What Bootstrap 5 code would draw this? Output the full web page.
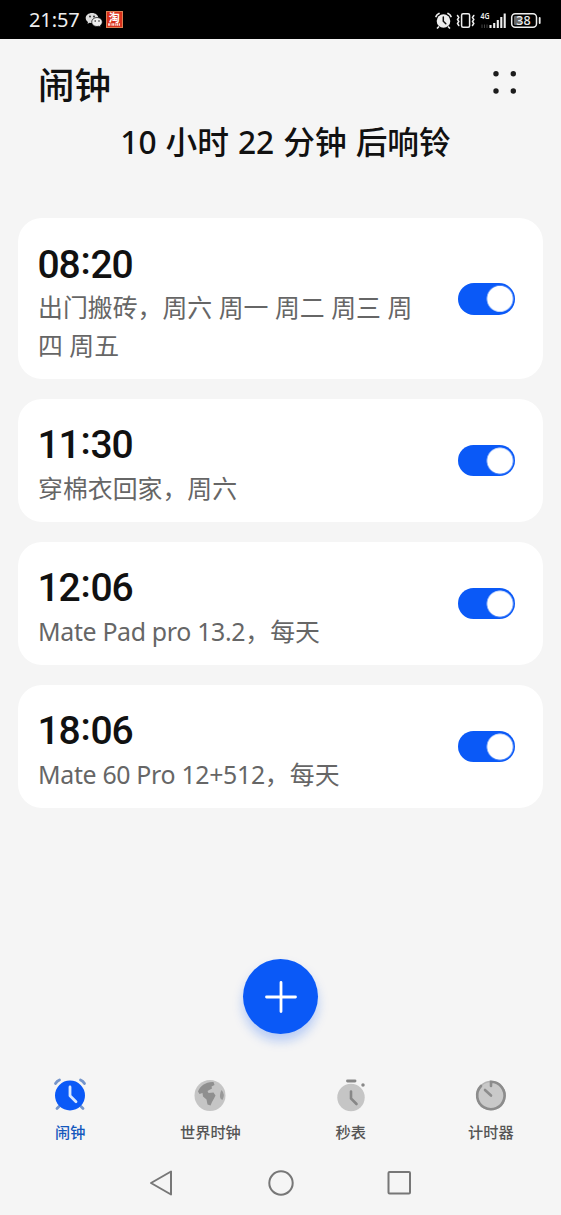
<!DOCTYPE html>
<html lang="zh-CN">
<head>
<meta charset="utf-8">
<meta name="viewport" content="width=device-width, initial-scale=1">
<title>闹钟</title>
<link rel="stylesheet" href="https://cdn.jsdelivr.net/npm/bootstrap@5.3.0/dist/css/bootstrap.min.css">
<style>
  body { background: #f5f5f5; color: #111; font-family: "Noto Sans", "Noto Sans CJK SC", sans-serif; height: 1215px; overflow: hidden; }
  svg { display: block; flex: none; }
  .status-bar { height: 39px; background: #000; color: #eee; padding: 0 20px 0 29px; }
  .status-time { font-size: 20px; line-height: 39px; letter-spacing: -.1px; }
  .taobao { width: 17px; height: 17px; margin-left: 3px; background: #d8301c; border: 1px solid #dd8053; font-size: 11px; line-height: 11px; font-weight: 700; color: #fff; }
  .title-row { height: 90px; padding: 0 42px 0 38px; }
  .title-row h1 { font: 500 36.5px/90px "Noto Sans CJK SC", sans-serif; }
  .countdown { font-size: 31.7px; line-height: 46px; height: 99.3px; font-weight: 500; margin-top: -10px; padding-left: 10px; white-space: pre; word-spacing: .8px; }
  .alarms { padding: 0 18px; gap: 19.5px; }
  .alarm { --bs-card-border-width: 0; --bs-card-border-radius: 24px; padding: 22px 28px 15px 20px; }
  .alarm-time { font-family: Roboto, "Noto Sans", sans-serif; font-size: 39px; line-height: 47px; font-weight: 500; letter-spacing: -1.2px; height: 49px; padding-top: 1.6px; margin-left: -.5px; }
  .colon { display: inline-block; transform: translateY(-4px); margin: 0 1px 0 1px; }
  .alarm-note { color: #666; font-size: 24.9px; line-height: 37.5px; width: 380px; }
  .latin { letter-spacing: -.33px; }
  .form-switch.toggle { padding: 0; min-height: 0; margin: 0 0 7px; }
  .toggle .form-check-input { width: 57.5px; height: 31.5px; margin: 0; float: none; display: block; border: 0; border-radius: 16px; background: #0a59f7 radial-gradient(circle at 41.5px 50%, #fff 12.7px, transparent 13.4px); }
  .add-btn { width: 75px; height: 75px; padding: 0; background: #0a59f7; margin-top: 151px; box-shadow: 0 7px 11px #0a59f745; }
  .tabs { margin-top: 43px; height: 76px; }
  .tab-item { color: #555; font: 500 15.2px/22px "Noto Sans CJK SC", sans-serif; gap: 7px; }
  .tab-item.active { color: #1458bd; }
  .sys-nav { height: 60px; padding: 0 147px; }
</style>
</head>
<body>
<div class="d-flex flex-column h-100">
  <div class="status-bar d-flex align-items-center flex-shrink-0">
    <span class="status-time">21:57</span>
    <svg width="18" height="16" viewBox="0 0 18 16" style="margin-left:5px">
      <path d="M7 1C3.4 1 .7 3.2.7 6c0 1.600.9 3 2.300 3.900l-.5 1.900 2.200-1.100c.7.2 1.400.3 2.300.3 3.600 0 6.300-2.200 6.300-5S10.600 1 7 1z" fill="#ddd"/>
      <path d="M12 5.500c-3 0-5.300 2-5.300 4.500s2.300 4.500 5.300 4.500c.7 0 1.300-.1 1.900-.3l1.800 1-.4-1.700c1.200-.8 2-2 2-3.500 0-2.500-2.300-4.500-5.300-4.500z" fill="#eee" stroke="#000" stroke-width=".7"/>
      <g fill="#222"><circle cx="5" cy="4.500" r=".9"/><circle cx="9" cy="4.500" r=".9"/><circle cx="10.200" cy="9" r=".8"/><circle cx="14" cy="9" r=".8"/></g>
    </svg>
    <span class="taobao d-flex flex-column align-items-center overflow-hidden"><span>淘</span>
      <svg width="12" height="3" viewBox="0 0 12 3"><path d="M0 1.500h12" stroke="#fbd5cd" stroke-width="2.500" stroke-dasharray="2 .6 1 .6"/></svg>
    </span>
    <svg class="ms-auto" width="106" height="20" viewBox="435 9 106 20">
      <g stroke="#eee" fill="none" stroke-linecap="round">
        <circle cx="443.500" cy="20" r="6.800" fill="#eee" stroke="none"/>
        <path d="M436 15.500q.7-2 3-3M451 15.500q-.7-2-3-3M438.500 26l-1 1M448.500 26l1 1" stroke-width="1.700"/>
        <path d="M443.300 16v4.200l2.500 2.500" stroke="#111" stroke-width="1.500"/>
        <rect x="461.600" y="12.800" width="8" height="13.400" rx="1.500" stroke-width="1.500"/>
        <path d="M457.500 14.500l1.300 2-1.300 2 1.300 2-1.300 2 1.300 2M473.800 14.500l-1.300 2 1.300 2-1.300 2 1.300 2-1.300 2" stroke-width="1.500"/>
        <g stroke-width="2.100" stroke-linecap="butt"><path d="M490.500 27v-3M494.200 27v-5M497.800 27v-8M501.300 27v-11M504.700 27V12.500"/></g>
        <rect x="511.700" y="12.700" width="24.800" height="13.600" rx="3.500" stroke-width="1.500"/>
        <path d="M539.700 17v5" stroke-width="1.800"/>
      </g>
      <rect x="514" y="15" width="7" height="9" rx="1" fill="#666"/>
      <text x="480.500" y="18" font-size="8.500" font-weight="600" fill="#eee" textLength="9" lengthAdjust="spacingAndGlyphs" font-family="Noto Sans">4G</text>
      <path d="M482 23.500v3.500M484.500 23.500v3.500M487 23.500v3.500" stroke="#444" stroke-width="1"/>
      <text x="523.500" y="24" font-size="12.500" text-anchor="middle" font-weight="500" fill="#eee" font-family="Noto Sans">38</text>
    </svg>
  </div>

  <header class="title-row d-flex justify-content-between align-items-center flex-shrink-0">
    <h1 class="m-0">闹钟</h1>
    <svg width="28" height="28" viewBox="0 0 28 28" fill="#1c1c1c"><circle cx="5" cy="3.800" r="2.700"/><circle cx="22.300" cy="3.800" r="2.700"/><circle cx="5" cy="21" r="2.700"/><circle cx="22.300" cy="21" r="2.700"/></svg>
  </header>
  <div class="countdown text-center flex-shrink-0">10 小时 22 分钟 后响铃</div>

  <main class="alarms d-flex flex-column">
    <div class="card alarm flex-row justify-content-between align-items-center">
      <div><div class="alarm-time">08<span class="colon">:</span>20</div><div class="alarm-note">出门搬砖，周六 周一 周二 周三 周四 周五</div></div>
      <div class="form-check form-switch toggle"><input class="form-check-input" type="checkbox" role="switch" checked></div>
    </div>
    <div class="card alarm flex-row justify-content-between align-items-center">
      <div><div class="alarm-time">11<span class="colon">:</span>30</div><div class="alarm-note">穿棉衣回家，周六</div></div>
      <div class="form-check form-switch toggle"><input class="form-check-input" type="checkbox" role="switch" checked></div>
    </div>
    <div class="card alarm flex-row justify-content-between align-items-center">
      <div><div class="alarm-time">12<span class="colon">:</span>06</div><div class="alarm-note"><span class="latin">Mate Pad pro 13.2</span>，每天</div></div>
      <div class="form-check form-switch toggle"><input class="form-check-input" type="checkbox" role="switch" checked></div>
    </div>
    <div class="card alarm flex-row justify-content-between align-items-center">
      <div><div class="alarm-time">18<span class="colon">:</span>06</div><div class="alarm-note"><span class="latin">Mate 60 Pro 12+512</span>，每天</div></div>
      <div class="form-check form-switch toggle"><input class="form-check-input" type="checkbox" role="switch" checked></div>
    </div>
  </main>

  <button class="btn add-btn rounded-circle border-0 mx-auto d-flex align-items-center justify-content-center flex-shrink-0" type="button">
    <svg width="32" height="32" viewBox="0 0 32 32"><path d="M16 1.500v29M1.500 16h29" stroke="#fff" stroke-width="2.800" stroke-linecap="round"/></svg>
  </button>

  <nav class="tabs row g-0 flex-shrink-0">
    <div class="col tab-item active d-flex flex-column align-items-center">
      <svg width="36" height="36" viewBox="0 0 36 36" fill="none" stroke-linecap="round">
        <path d="M3.500 6.500q1.500-2.500 4-3.500M32.500 6.500q-1.500-2.500-4-3.500M5 31.500l3-3M31 31.500l-3-3" stroke="#7595cb" stroke-width="2.800"/>
        <circle cx="18" cy="18.500" r="15" fill="#0a59f7"/><path d="M18 10v8.800l6 6" stroke="#d9e8ff" stroke-width="2.800" stroke-linejoin="round"/>
      </svg>闹钟</div>
    <div class="col tab-item d-flex flex-column align-items-center">
      <svg width="36" height="36" viewBox="0 0 36 36">
        <circle cx="18" cy="18.500" r="15.500" fill="#c5c5c5"/>
        <path d="M6 14.500C8 9 14 4.500 21.500 5l1 3-3 1.500.5 2-4.500 2.500 1 2 5-.5 2 3-1.500 3-2 3.500-1.500 3.500-3-1-1-5-3.500-3-.5-3.500-3 1z" fill="#8f8f8f"/><path d="M29.500 13q4 4 1 10-3-1-2.500-5 .2-3 1.500-5z" fill="#999"/>
      </svg>世界时钟</div>
    <div class="col tab-item d-flex flex-column align-items-center">
      <svg width="36" height="36" viewBox="0 0 36 36" fill="none" stroke="#878787" stroke-linecap="round">
        <circle cx="18" cy="20.500" r="13.700" fill="#c5c5c5" stroke="none"/><path d="M14.500 4h7.500" stroke-width="2.900"/><circle cx="30" cy="8" r=".8" stroke-width="1.900"/><path d="M18 14.500v7l5.500 5.500" stroke-width="2.600"/>
      </svg>秒表</div>
    <div class="col tab-item d-flex flex-column align-items-center">
      <svg width="36" height="36" viewBox="0 0 36 36" fill="none" stroke="#8c8c8c" stroke-linecap="round">
        <circle cx="18" cy="18.500" r="14" fill="#c9c9c9" stroke="#b5b5b5" stroke-width="1.500"/><path d="M18 9V4.800A13.700 13.700 0 1 1 8 9" stroke-width="2.600"/><path d="M12 13l6 5.500" stroke-width="2.600"/>
      </svg>计时器</div>
  </nav>

  <div class="sys-nav d-flex justify-content-between align-items-center flex-shrink-0">
    <svg width="28" height="28" viewBox="0 0 28 28" fill="none" stroke="#777" stroke-width="2" stroke-linejoin="round"><path d="M24 2.500v23L4 14z"/></svg>
    <svg width="28" height="28" viewBox="0 0 28 28" fill="none" stroke="#777" stroke-width="2"><circle cx="14" cy="14" r="11.700"/></svg>
    <svg width="28" height="28" viewBox="0 0 28 28" fill="none" stroke="#777" stroke-width="2"><rect x="2.500" y="3" width="21.500" height="21.500" rx="1"/></svg>
  </div>
</div>
<script src="https://cdn.jsdelivr.net/npm/bootstrap@5.3.0/dist/js/bootstrap.bundle.min.js"></script>
</body>
</html>
